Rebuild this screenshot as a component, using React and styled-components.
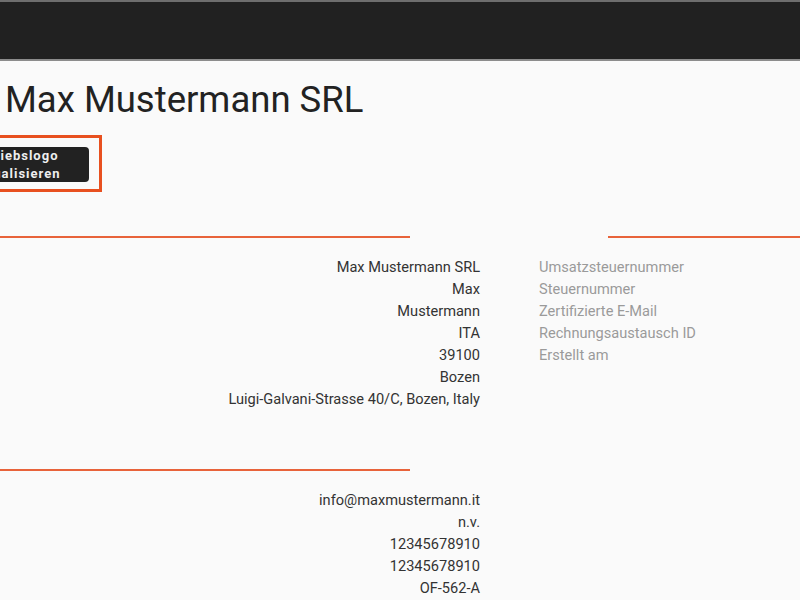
import React from "react";
import styled, { createGlobalStyle } from "styled-components";

const Global = createGlobalStyle`
  html, body { margin: 0; padding: 0; }
  body {
    background: #fafafa;
    font-family: Roboto, "Liberation Sans", sans-serif;
    overflow: hidden;
    width: 800px;
    height: 600px;
  }
`;

const TopBar = styled.header`
  height: 57px;
  background: #212121;
  border-top: 2px solid #6e6e6e;
  border-bottom: 2px solid #8c8c8c;
`;

const Main = styled.main`
  display: flex;
  flex-direction: column;
`;

const Title = styled.h1`
  margin: 18px 0 0 5px;
  font-size: 36.5px;
  font-weight: 400;
  line-height: 42px;
  color: #222;
`;

const LogoFrame = styled.div`
  align-self: flex-start;
  margin: 14px 0 0 -51px;
  padding: 9px 10px 7px 10px;
  border: 3px solid #e8501f;
`;

const LogoButton = styled.button`
  display: block;
  width: 127px;
  height: 35px;
  padding: 0 10px;
  border: none;
  border-radius: 4px;
  background: #222;
  color: #eee;
  font-family: Roboto, "Liberation Sans", sans-serif;
  font-size: 13px;
  font-weight: 700;
  letter-spacing: 1px;
  line-height: 17.5px;
  text-align: left;
`;

const SectionRule = styled.div`
  display: flex;
  gap: 198px;
  margin-top: ${(p) => p.$top}px;
  &::before, &::after {
    content: "";
    height: 2px;
    background: #e8633a;
  }
  &::before { width: 410px; }
  &::after { flex: 1; visibility: ${(p) => (p.$single ? "hidden" : "visible")}; }
`;

const Details = styled.div`
  display: grid;
  grid-template-columns: 480px 1fr;
  column-gap: 59px;
  margin-top: ${(p) => p.$top}px;
`;

const List = styled.div`
  display: flex;
  flex-direction: column;
  font-size: 14.6px;
  line-height: 22px;
  color: ${(p) => (p.$muted ? "#9a9a9a" : "#333")};
  text-align: ${(p) => (p.$muted ? "left" : "right")};
`;

const company = [
  "Max Mustermann SRL",
  "Max",
  "Mustermann",
  "ITA",
  "39100",
  "Bozen",
  "Luigi-Galvani-Strasse 40/C, Bozen, Italy",
];

const labels = [
  "Umsatzsteuernummer",
  "Steuernummer",
  "Zertifizierte E-Mail",
  "Rechnungsaustausch ID",
  "Erstellt am",
];

const contact = [
  "info@maxmustermann.it",
  "n.v.",
  "12345678910",
  "12345678910",
  "OF-562-A",
];

export default function App() {
  return (
    <>
      <Global />
      <TopBar />
      <Main>
        <Title>Max Mustermann SRL</Title>
        <LogoFrame>
          <LogoButton>
            Betriebslogo
            <br />
            aktualisieren
          </LogoButton>
        </LogoFrame>
        <SectionRule $top={44} />
        <Details $top={18}>
          <List>
            {company.map((t) => (
              <span key={t}>{t}</span>
            ))}
          </List>
          <List $muted>
            {labels.map((t) => (
              <span key={t}>{t}</span>
            ))}
          </List>
        </Details>
        <SectionRule $top={59} $single />
        <Details $top={18}>
          <List>
            {contact.map((t, i) => (
              <span key={i}>{t}</span>
            ))}
          </List>
        </Details>
      </Main>
    </>
  );
}
